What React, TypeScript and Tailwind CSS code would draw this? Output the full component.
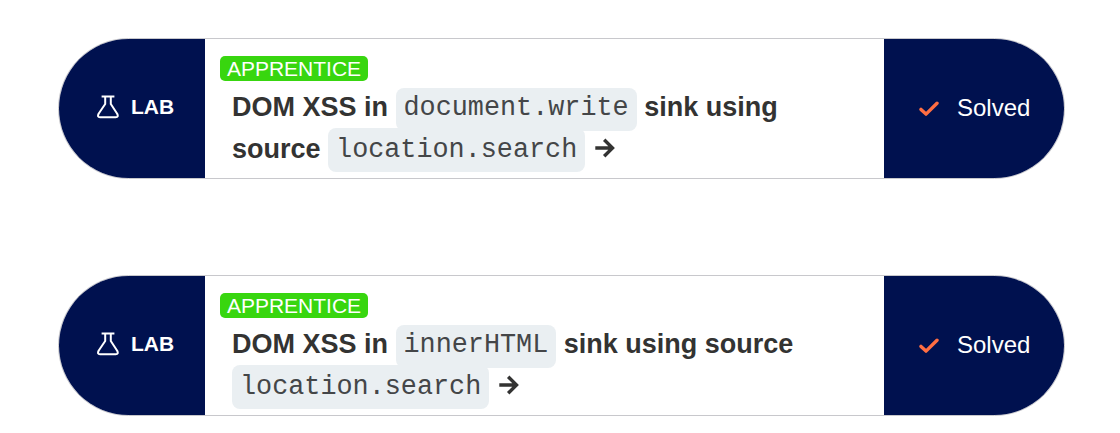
import type { ReactNode } from "react";

function FlaskIcon() {
  return (
    <svg className="h-6 w-[22px] shrink-0" viewBox="0 0 22 24" fill="none" stroke="white" strokeWidth="2" strokeLinejoin="round">
      <path d="M4.6 1.6H17.4M8.2 1.8V9L1.6 18.8Q0 22.2 3 22.2H18.8Q21.8 22.2 20.2 18.8L13.8 9V1.8" />
    </svg>
  );
}

function CheckIcon() {
  return (
    <svg className="mt-[3px] h-4 w-5 shrink-0" viewBox="0 0 20 16" fill="none" stroke="#ff6e42" strokeWidth="3.4" strokeLinecap="round" strokeLinejoin="round">
      <path d="M2 8.4L7 13.1L18 2.2" />
    </svg>
  );
}

function ArrowIcon() {
  return (
    <svg className="ml-2.5 inline-block h-5 w-5 align-[0px]" viewBox="0 0 20 20" fill="none" stroke="#333332" strokeWidth="3.4">
      <path d="M0.3 10H17.5M9.2 1.7L17.5 10L9.2 18.3" />
    </svg>
  );
}

function Code({ children, className = "pt-[6.5px] pb-[7.5px]" }: { children: ReactNode; className?: string }) {
  return (
    <code
      className={`rounded-lg bg-[#eaeff2] px-2 align-[1.5px] font-['Liberation_Mono','Courier_New',monospace] text-[26.8px] leading-none font-normal text-[#444648] ${className}`}
    >
      {children}
    </code>
  );
}

function LabCard({ children }: { children: ReactNode }) {
  return (
    <article className="flex h-[141px] w-[1007px] overflow-hidden rounded-full border border-[#c8c8cc] bg-white">
      <div className="flex w-[146px] shrink-0 items-center gap-3 bg-[#00114f] pb-1 pl-[38px] text-[21px] font-bold text-white">
        <FlaskIcon />
        <span>LAB</span>
      </div>
      <div className="min-w-0 flex-1 pt-[17px] pl-[15px]">
        <div className="h-[25px] w-[148px] rounded-[5px] bg-[#38d60f] text-center text-[21px] leading-[26px] text-white">
          APPRENTICE
        </div>
        <h2 className="mt-[5px] pl-3 text-[27px] leading-[42px] font-bold whitespace-nowrap text-[#333332]">{children}</h2>
      </div>
      <div className="flex w-[180px] shrink-0 items-center gap-[18px] bg-[#00114f] pb-0.5 pl-[35px] text-2xl text-white">
        <CheckIcon />
        <span>Solved</span>
      </div>
    </article>
  );
}

export default function App() {
  return (
    <main className="flex h-[433px] flex-col gap-24 overflow-hidden bg-white pt-[38px] pl-[58px] font-['Liberation_Sans',Arial,sans-serif]">
      <LabCard>
        DOM XSS in <Code className="pt-[4.5px] pb-[8.5px]">document.write</Code> sink using
        <br />
        source <Code>location.search</Code>
        <ArrowIcon />
      </LabCard>
      <LabCard>
        DOM XSS in <Code className="pt-[4.5px] pb-[8.5px]">innerHTML</Code> sink using source
        <br />
        <Code>location.search</Code>
        <ArrowIcon />
      </LabCard>
    </main>
  );
}
